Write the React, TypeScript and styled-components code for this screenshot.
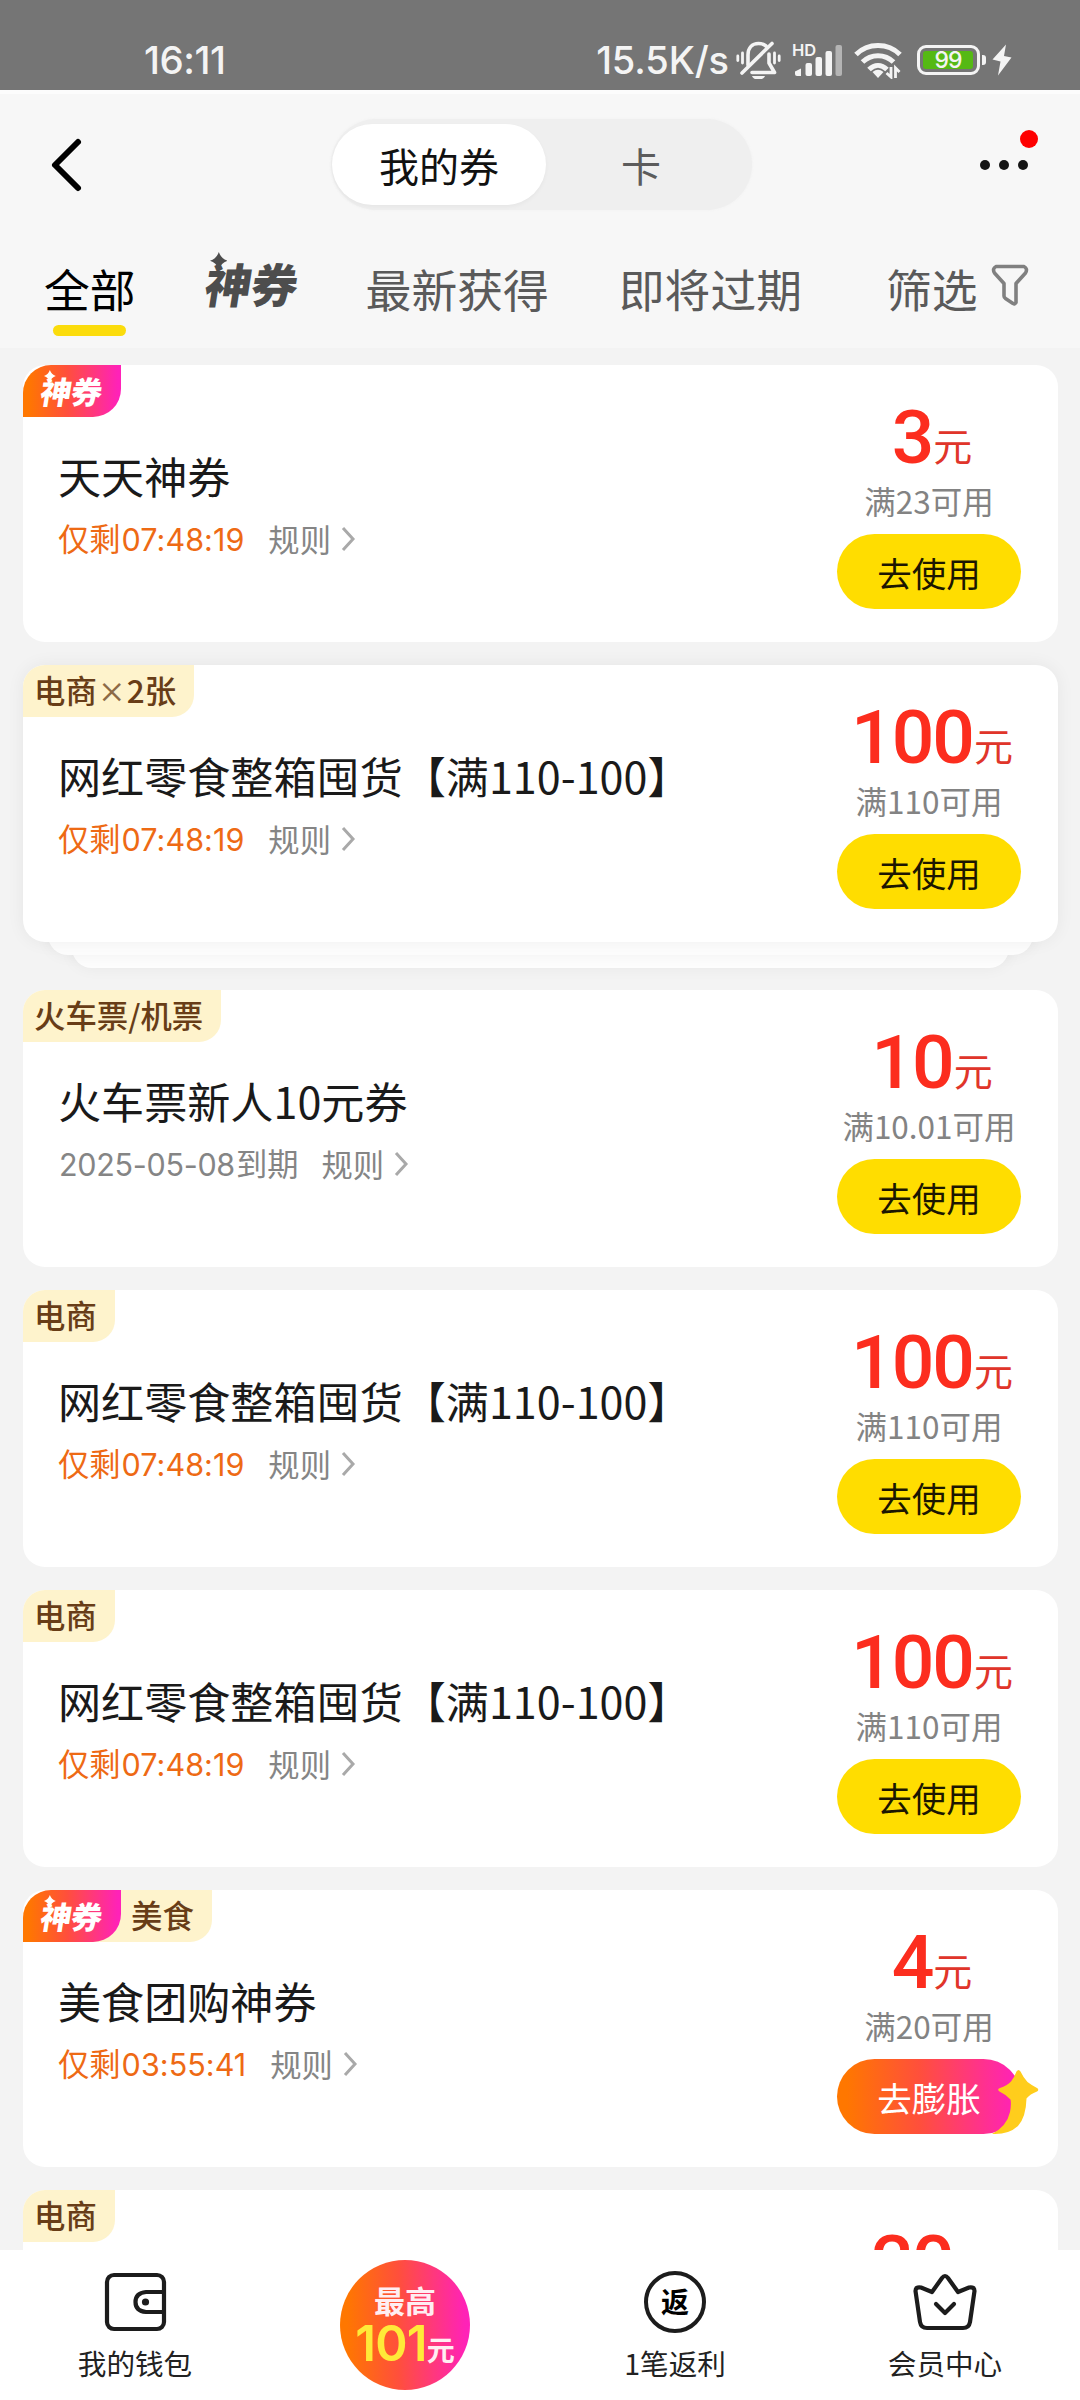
import React from 'react';
import styled, { createGlobalStyle } from 'styled-components';

const CJK = `'Noto Sans CJK SC', 'Noto Sans', sans-serif`;
const LATIN = `Inter, 'Noto Sans CJK SC', sans-serif`;
const FLAME = 'linear-gradient(90deg, #ff7700 5%, #ff4f3c 45%, #ff22b8 97%)';

const GlobalStyle = createGlobalStyle`
  html, body { margin: 0; padding: 0; background: #f3f3f3; }
  * { box-sizing: border-box; }
  button { border: 0; padding: 0; font: inherit; background: none; }
`;

const Page = styled.div`
  width: 1080px;
  height: 2400px;
  display: flex;
  flex-direction: column;
  overflow: hidden;
  background: #f3f3f3;
  font-family: ${CJK};
  color: #1a1a1a;
`;

/* ---------- status bar ---------- */
const StatusBar = styled.div`
  flex: none;
  height: 90px;
  padding: 30px 68px 0 144px;
  display: flex;
  justify-content: space-between;
  background: #757575;
  color: #f4f4f4;
  font-family: ${LATIN};
`;
const Clock = styled.div`
  font-size: 38.5px;
  line-height: 61px;
  font-weight: 500;
  letter-spacing: -0.5px;
`;
const StatusRight = styled.div`
  display: flex;
  height: 60px;
  align-items: center;
`;
const Speed = styled.div`
  font-size: 38px;
  line-height: 60px;
  font-weight: 500;
  letter-spacing: -0.1px;
  margin-right: 7px;
`;
const BatteryWrap = styled.div`
  display: flex;
  align-items: center;
  margin: 0 6px 0 15px;
`;
const BatteryShell = styled.div`
  width: 63px;
  height: 30px;
  padding: 3px;
  border: 3px solid #f4f4f4;
  border-radius: 9px;
`;
const BatteryFill = styled.div`
  height: 18px;
  width: 50px;
  border-radius: 3px;
  background: #55b914;
  display: flex;
  align-items: center;
  justify-content: center;
  font-size: 23px;
  font-weight: 500;
  letter-spacing: -1px;
  line-height: 18px;
`;
const BatteryNub = styled.div`
  width: 4px;
  height: 10px;
  margin-left: 2px;
  border-radius: 0 3px 3px 0;
  background: #f4f4f4;
`;

/* ---------- header ---------- */
const Header = styled.header`
  flex: none;
  height: 258px;
  border-top: 4px solid #fcfcfc;
  background: #f7f7f7;
`;
const TitleBar = styled.div`
  height: 116px;
  padding: 25px 42px 0 50px;
  display: grid;
  grid-template-columns: 281px 421px 1fr;
`;
const BackButton = styled.button`
  height: 91px;
  display: flex;
  align-items: center;
`;
const Segment = styled.div`
  height: 91px;
  padding: 5px 1px;
  border-radius: 46px;
  background: #efefef;
  display: flex;
  box-shadow: 0 0 3px #f0f0f0;
`;
const SegmentItem = styled.button<{ $active?: boolean }>`
  width: ${(p) => (p.$active ? 214 : 190)}px;
  height: 81px;
  border-radius: 41px;
  font-size: 40px;
  line-height: 78px;
  color: ${(p) => (p.$active ? '#111' : '#5c5c5c')};
  background: ${(p) => (p.$active ? '#fff' : 'transparent')};
  box-shadow: ${(p) => (p.$active ? '0 2px 4px rgba(0,0,0,.04)' : 'none')};
`;
const MoreButton = styled.button`
  height: 91px;
  position: relative;
  display: flex;
  gap: 9px;
  align-items: center;
  justify-content: flex-end;
  padding-right: 10px;
`;
const Dot = styled.i`
  width: 10px;
  height: 10px;
  border-radius: 50%;
  background: #151515;
`;
const RedDot = styled.i`
  position: absolute;
  right: 0;
  top: 11px;
  width: 18px;
  height: 18px;
  border-radius: 50%;
  background: #fe0000;
`;
const Tabs = styled.nav`
  height: 138px;
  padding: 44px 0 0 44px;
  display: flex;
  font-size: 45.8px;
  line-height: 68px;
  > * { flex: none; }
`;
const Tab = styled.div<{ $active?: boolean; $gap: number }>`
  color: ${(p) => (p.$active ? '#000' : '#5a5a5a')};
  margin-right: ${(p) => p.$gap}px;
  display: flex;
  flex-direction: column;
  align-items: center;
  white-space: nowrap;
  &::after {
    content: '';
    display: ${(p) => (p.$active ? 'block' : 'none')};
    width: 73px;
    height: 11px;
    margin-top: 3px;
    border-radius: 6px;
    background: #fbdc0c;
  }
`;
const FilterTab = styled.div`
  display: flex;
  align-items: flex-start;
  gap: 13px;
  color: #5a5a5a;
  white-space: nowrap;
  svg { margin-top: 10px; }
`;

/* ---------- brand word mark ---------- */
const Mark = styled.span<{ $size: number }>`
  position: relative;
  display: inline-block;
  white-space: nowrap;
  font-size: ${(p) => p.$size}px;
  font-weight: 900;
  line-height: 1.2;
  letter-spacing: -0.01em;
`;
const MarkText = styled.span`
  display: inline-block;
  transform: skewX(-9deg);
`;
const MarkStar = styled.svg`
  position: absolute;
  left: 0.09em;
  top: -0.07em;
  width: 0.38em;
  height: 0.38em;
`;
const MarkTab = styled.div`
  width: 92px;
  height: 60px;
  margin: -5px 68px 0 0;
  color: #4d4d4d;
`;

/* ---------- coupon list ---------- */
const List = styled.main`
  flex: 1;
  min-height: 0;
  overflow: hidden;
  padding: 17px 22px 0 23px;
  display: flex;
  flex-direction: column;
  gap: 23px;
`;
const CardSlot = styled.div<{ $stacked?: boolean }>`
  flex: none;
  padding-bottom: ${(p) => (p.$stacked ? 25 : 0)}px;
  position: relative;
`;
const StackSheet = styled.div<{ $inset: number; $bottom: number }>`
  position: absolute;
  left: ${(p) => p.$inset}px;
  right: ${(p) => p.$inset}px;
  bottom: ${(p) => p.$bottom}px;
  height: 60px;
  border-radius: 20px;
  background: #fdfdfd;
  box-shadow: 0 0 16px rgba(0, 0, 0, 0.05);
`;
const Card = styled.article<{ $stacked?: boolean }>`
  position: relative;
  height: 277px;
  border-radius: 22px;
  background: #fff;
  display: flex;
  justify-content: space-between;
  padding-right: 37px;
  box-shadow: ${(p) => (p.$stacked ? '0 0 18px rgba(0,0,0,.06)' : 'none')};
`;
const Info = styled.div`
  display: flex;
  flex-direction: column;
  align-items: flex-start;
`;
const Badges = styled.div`
  height: 52px;
  display: flex;
`;
const FlameBadge = styled.div`
  width: 98px;
  height: 52px;
  border-radius: 28px 0 28px 0;
  background: ${FLAME};
  color: #fff;
  display: flex;
  justify-content: center;
  align-items: center;
  position: relative;
  z-index: 1;
`;
const Badge = styled.div<{ $after?: boolean }>`
  height: 52px;
  margin-left: ${(p) => (p.$after ? -28 : 0)}px;
  padding: 0 18px 0 ${(p) => (p.$after ? 38 : 11)}px;
  border-radius: ${(p) => (p.$after ? 0 : 22)}px 0 22px 0;
  background: #fef3cc;
  color: #683d17;
  font-size: 31.4px;
  font-weight: 500;
  line-height: 49px;
  white-space: nowrap;
`;
const Times = styled.span`
  display: inline-block;
  width: 30px;
  text-align: center;
  font-size: 28px;
  font-weight: 500;
  opacity: 0.75;
`;
const Title = styled.h2`
  margin: 28px 0 0 35px;
  font-size: 43.1px;
  line-height: 60px;
  font-weight: 400;
  white-space: nowrap;
`;
const Meta = styled.div`
  margin: 14px 0 0 35px;
  display: flex;
  align-items: center;
  height: 40px;
  font-size: 31.3px;
  line-height: 40px;
  color: #858585;
`;
const Validity = styled.span<{ $urgent?: boolean }>`
  color: ${(p) => (p.$urgent ? '#ee6a14' : '#858585')};
  margin-right: 23px;
  white-space: nowrap;
`;
const Digits = styled.span<{ $track: number }>`
  font-family: ${LATIN};
  font-size: 30.5px;
  letter-spacing: ${(p) => p.$track}px;
  margin: 0 1px;
`;
const Rules = styled.span`
  display: inline-flex;
  align-items: center;
  gap: 9px;
`;
const Action = styled.div`
  width: 184px;
  display: flex;
  flex-direction: column;
  align-items: center;
`;
const Price = styled.div`
  height: 110px;
  padding: 35px 0 0 6px;
  display: flex;
  align-items: baseline;
  color: #fc2d1e;
  white-space: nowrap;
`;
const Amount = styled.span`
  font-family: Roboto, sans-serif;
  font-size: 75px;
  line-height: 75px;
  font-weight: 500;
  letter-spacing: -2px;
  margin-right: 1px;
`;
const Unit = styled.span`
  position: relative;
  top: -2px;
  font-size: 39px;
  line-height: 39px;
  color: #e0352a;
`;
const Condition = styled.div`
  height: 50px;
  line-height: 50px;
  font-size: 31.5px;
  color: #838383;
  white-space: nowrap;
`;
const UseButton = styled.button<{ $flame?: boolean }>`
  flex: none;
  position: relative;
  width: 184px;
  height: 75px;
  margin-top: 9px;
  border-radius: 38px;
  font-size: 34.5px;
  line-height: 77px;
  color: ${(p) => (p.$flame ? '#fff' : '#1c1600')};
  background: ${(p) => (p.$flame ? FLAME : '#ffdd00')};
`;
const Boost = styled.svg`
  position: absolute;
  left: 149px;
  top: 9px;
`;

/* ---------- bottom navigation ---------- */
const BottomNav = styled.footer`
  flex: none;
  height: 150px;
  background: #fff;
  display: grid;
  grid-template-columns: repeat(4, 1fr);
`;
const NavItem = styled.div`
  display: flex;
  flex-direction: column;
  align-items: center;
  font-size: 28.6px;
  line-height: 40px;
  color: #222;
  svg { margin-top: 20px; }
`;
const NavLabel = styled.span`
  margin-top: 9px;
`;
const ReturnIcon = styled.div`
  width: 62px;
  height: 62px;
  margin: 21px 0 1px;
  border: 4px solid #1c1c1c;
  border-radius: 50%;
  display: flex;
  align-items: center;
  justify-content: center;
  font-size: 28px;
  font-weight: 700;
  line-height: 50px;
  padding-bottom: 3px;
  color: #000;
`;
const MaxBubble = styled.div`
  width: 130px;
  height: 130px;
  margin-top: 10px;
  border-radius: 50%;
  background: ${FLAME};
  display: flex;
  flex-direction: column;
  align-items: center;
  color: #ffeef2;
`;
const MaxTop = styled.div`
  font-size: 31px;
  font-weight: 700;
  line-height: 40px;
  margin-top: 20px;
`;
const MaxBottom = styled.div`
  height: 50px;
  margin-top: 3px;
  display: flex;
  align-items: baseline;
  font-size: 28px;
  font-weight: 700;
  line-height: 42px;
`;
const MaxNumber = styled.span`
  font-family: Inter, sans-serif;
  font-size: 49px;
  line-height: 42px;
  font-weight: 600;
  color: #ffea38;
  letter-spacing: -0.7px;
`;

const Wordmark = ({ size }: { size: number }) => (
  <Mark $size={size}>
    <MarkText>神券</MarkText>
    <MarkStar viewBox="0 0 16 16">
      <path d="M8 0Q10 6 16 8Q10 10 8 16Q6 10 0 8Q6 6 8 0Z" fill="currentColor" />
    </MarkStar>
  </Mark>
);

const Arrow = () => (
  <svg width="16" height="28" viewBox="0 0 16 28" fill="none">
    <path d="M3 3L13 14L3 25" stroke="#a9a9a9" strokeWidth="3" />
  </svg>
);

const MutedBell = () => (
  <svg width="45" height="38" viewBox="0 0 45 38" fill="none" stroke="#f4f4f4" strokeWidth="3.6" strokeLinecap="round">
    <path d="M12 24V14C12 7 16 2.5 22.5 2.5C25.5 2.5 28 3.4 30 5" />
    <path d="M33 13V22L38.5 31.5H16" strokeLinejoin="round" />
    <path d="M36 2.5L6 32" />
    <path d="M16 35H29C27 40 18 40 16 35Z" fill="#f4f4f4" stroke="none" />
    <path d="M6.5 12V22M1.8 15V19.5M38.5 12V22M43.2 15V19.5" strokeWidth="2.8" />
  </svg>
);

const SignalIcon = styled.svg`
  margin-left: 11px;
`;
const Signal = () => (
  <SignalIcon width="52" height="38" viewBox="0 0 52 38">
    <text x="0" y="15" fontFamily="Inter, sans-serif" fontSize="16.5" fontWeight="600" fill="#f4f4f4">HD</text>
    <path d="M3 33V30.5L9 27.5V35H5Q3 35 3 33Z" fill="#f4f4f4" />
    <rect x="13.5" y="22" width="6.5" height="13" rx="2" fill="#f4f4f4" />
    <rect x="23.5" y="16" width="6.5" height="19" rx="2" fill="#f4f4f4" />
    <rect x="33.5" y="10" width="6.5" height="25" rx="2" fill="#f4f4f4" />
    <rect x="43.5" y="4" width="6.5" height="31" rx="2" fill="#b4b4b4" />
  </SignalIcon>
);

const WifiIcon = styled.svg`
  margin-left: 10px;
`;
const Wifi = () => (
  <WifiIcon width="48" height="38" viewBox="0 0 48 38" fill="none" stroke="#f4f4f4" strokeWidth="5">
    <path d="M2 13.5C14 1.5 34 1.5 46 13.5" />
    <path d="M8.5 21C17 12.5 31 12.5 39.5 21" />
    <path d="M15 28.5C20.5 23 27.5 23 33 28.5" />
    <path d="M18.5 31Q24 26.5 29.5 31L24 37Z" fill="#f4f4f4" stroke="none" />
    <path d="M37 26V36L32.5 32M41.5 37V27L45.5 31" strokeWidth="2.8" />
  </WifiIcon>
);

interface Coupon {
  flame?: boolean;
  category?: React.ReactNode;
  title?: string;
  countdown?: string;
  expiry?: string;
  amount: string;
  condition?: string;
  stacked?: boolean;
  boost?: boolean;
}

const SNACKS = '网红零食整箱囤货【满110-100】';

const coupons: Coupon[] = [
  { flame: true, title: '天天神券', countdown: '07:48:19', amount: '3', condition: '满23可用' },
  {
    category: (<>电商<Times>×</Times>2张</>),
    title: SNACKS, countdown: '07:48:19', amount: '100', condition: '满110可用', stacked: true,
  },
  { category: '火车票/机票', title: '火车票新人10元券', expiry: '2025-05-08', amount: '10', condition: '满10.01可用' },
  { category: '电商', title: SNACKS, countdown: '07:48:19', amount: '100', condition: '满110可用' },
  { category: '电商', title: SNACKS, countdown: '07:48:19', amount: '100', condition: '满110可用' },
  { flame: true, category: '美食', title: '美食团购神券', countdown: '03:55:41', amount: '4', condition: '满20可用', boost: true },
  { category: '电商', amount: '20' },
];

const CouponCard = ({ c }: { c: Coupon }) => (
  <CardSlot $stacked={c.stacked}>
    {c.stacked && (
      <>
        <StackSheet $inset={49} $bottom={-1} />
        <StackSheet $inset={25} $bottom={12} />
      </>
    )}
    <Card $stacked={c.stacked}>
      <Info>
        <Badges>
          {c.flame && <FlameBadge><Wordmark size={31} /></FlameBadge>}
          {c.category && <Badge $after={c.flame}>{c.category}</Badge>}
        </Badges>
        {c.title && (
          <>
            <Title>{c.title}</Title>
            <Meta>
              {c.countdown ? (
                <Validity $urgent>仅剩<Digits $track={0.05}>{c.countdown}</Digits></Validity>
              ) : (
                <Validity><Digits $track={-0.3}>{c.expiry}</Digits>到期</Validity>
              )}
              <Rules>规则<Arrow /></Rules>
            </Meta>
          </>
        )}
      </Info>
      <Action>
        <Price><Amount>{c.amount}</Amount><Unit>元</Unit></Price>
        {c.condition && (
          <>
            <Condition>{c.condition}</Condition>
            <UseButton $flame={c.boost}>
              {c.boost ? '去膨胀' : '去使用'}
              {c.boost && (
                <Boost width="54" height="70" viewBox="0 0 54 70">
                  <path
                    d="M30.5 3.5Q32.5 0.5 34.5 3.5Q37 9 41.5 14Q46 17.5 51 20Q53.5 21.5 51 23.5Q44 26 40.5 30.5Q40 49 32 58Q22 67 6 66Q21 58 24 44Q25.5 36 24.5 31.5Q19 26 13.5 23.5Q10.5 21.5 14 20Q21 17.5 25 13.5Q28.5 9 30.5 3.5Z"
                    fill="#ffcd1c"
                  />
                </Boost>
              )}
            </UseButton>
          </>
        )}
      </Action>
    </Card>
  </CardSlot>
);

export default function App() {
  return (
    <>
      <GlobalStyle />
      <Page>
        <StatusBar>
          <Clock>16:11</Clock>
          <StatusRight>
            <Speed>15.5K/s</Speed>
            <MutedBell />
            <Signal />
            <Wifi />
            <BatteryWrap>
              <BatteryShell><BatteryFill>99</BatteryFill></BatteryShell>
              <BatteryNub />
            </BatteryWrap>
            <svg width="20" height="32" viewBox="0 0 20 32">
              <path d="M14 0.5L0.5 15.5L8.5 17.5L6 31.5L19.5 13.5L12 12Z" fill="#f4f4f4" />
            </svg>
          </StatusRight>
        </StatusBar>

        <Header>
          <TitleBar>
            <BackButton>
              <svg width="34" height="58" viewBox="0 0 34 58" fill="none">
                <path d="M28 6L5 29L28 52" stroke="#000" strokeWidth="6" strokeLinecap="round" strokeLinejoin="round" />
              </svg>
            </BackButton>
            <Segment>
              <SegmentItem $active>我的券</SegmentItem>
              <SegmentItem>卡</SegmentItem>
            </Segment>
            <MoreButton>
              <Dot /><Dot /><Dot />
              <RedDot />
            </MoreButton>
          </TitleBar>
          <Tabs>
            <Tab $active $gap={70}>全部</Tab>
            <MarkTab><Wordmark size={46.5} /></MarkTab>
            <Tab $gap={70}>最新获得</Tab>
            <Tab $gap={84}>即将过期</Tab>
            <FilterTab>
              筛选
              <svg width="38" height="42" viewBox="0 0 38 42" fill="none">
                <path
                  d="M5 2.5H33Q37 4.5 34.5 9L25 19.5V38.5Q24 40.5 22 39.5L14.5 34.5Q13 33.5 13 32V19.5L3.5 9Q1 4.5 5 2.5Z"
                  stroke="#808080" strokeWidth="3.6" strokeLinejoin="round"
                />
              </svg>
            </FilterTab>
          </Tabs>
        </Header>

        <List>
          {coupons.map((c, i) => <CouponCard key={i} c={c} />)}
        </List>

        <BottomNav>
          <NavItem>
            <svg width="66" height="64" viewBox="0 0 66 64" fill="none" stroke="#1c1c1c" strokeWidth="4.2">
              <rect x="5" y="5" width="57" height="54" rx="7" />
              <path d="M62 22H44Q33.5 23 33.5 32Q33.5 41 44 42H62" />
              <circle cx="43.5" cy="32" r="3.6" fill="#1c1c1c" stroke="none" />
            </svg>
            <NavLabel>我的钱包</NavLabel>
          </NavItem>
          <NavItem>
            <MaxBubble>
              <MaxTop>最高</MaxTop>
              <MaxBottom><MaxNumber>101</MaxNumber>元</MaxBottom>
            </MaxBubble>
          </NavItem>
          <NavItem>
            <ReturnIcon>返</ReturnIcon>
            <NavLabel>1笔返利</NavLabel>
          </NavItem>
          <NavItem>
            <svg width="66" height="64" viewBox="0 0 66 64" fill="none" stroke="#1c1c1c" strokeWidth="4.2" strokeLinecap="round" strokeLinejoin="round">
              <path d="M30 8Q33 4 36 8L46 22L57 17.5Q62.5 16.5 62.5 21L58 52Q57 58 51 58H15Q9 58 8 52L3.5 21Q3.5 16.5 9 17.5L20 22Z" />
              <path d="M24 34L33 43L42 34" />
            </svg>
            <NavLabel>会员中心</NavLabel>
          </NavItem>
        </BottomNav>
      </Page>
    </>
  );
}
